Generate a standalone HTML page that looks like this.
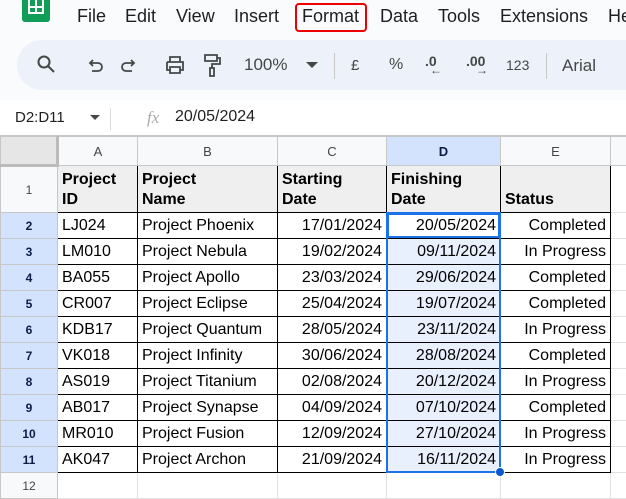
<!DOCTYPE html><html><head><style>
*{margin:0;padding:0;box-sizing:border-box}
body{width:626px;height:488px;overflow:hidden;background:#f9fbfd;font-family:"Liberation Sans",Arial,sans-serif;position:relative;color:#1f1f1f}
.a{position:absolute;white-space:nowrap}
.menu{top:6px;font-size:18px;color:#1f1f1f}
.tb{font-size:17px;color:#444746;top:55px}
table{position:absolute;left:0;top:136px;border-collapse:collapse;font-size:16px;table-layout:fixed;width:626px}
td{border:1px solid #e1e1e1;height:26px;padding:0 4px;overflow:hidden;white-space:nowrap;background:#fff;color:#000}
tr.h td{height:29px;background:#f8f9fa;color:#444;font-size:13px;text-align:center;border-color:#c7c7c7}
td.rh{background:#f8f9fa;color:#444;font-size:12px;text-align:center;border-color:#c7c7c7;padding:0}
td.rhs{background:#d3e3fd;color:#0b1d46;font-weight:bold}
.d td.b{border:1px solid #000}
td.r{text-align:right}
td.sel{background:#e8f0fe}
tr.t td.b{background:#efefef;font-weight:bold;vertical-align:bottom;line-height:20px;padding-bottom:2px;height:47px}
</style></head><body>
<div class="a" style="left:22px;top:-6px;width:28px;height:28px;background:#0f9d58;border-radius:3px"></div>
<div class="a" style="left:28px;top:0;width:16px;height:14px;border:2px solid #fff;border-top:none"></div>
<div class="a" style="left:35px;top:0;width:2px;height:14px;background:#fff"></div>
<div class="a" style="left:28px;top:6px;width:16px;height:2px;background:#fff"></div>
<div class="a menu" style="left:77px">File</div>
<div class="a menu" style="left:125px">Edit</div>
<div class="a menu" style="left:176px">View</div>
<div class="a menu" style="left:234px">Insert</div>
<div class="a menu" style="left:302px">Format</div>
<div class="a" style="left:295px;top:3px;width:72px;height:29px;border:2px solid #e00;border-radius:4px"></div>
<div class="a menu" style="left:380px">Data</div>
<div class="a menu" style="left:438px">Tools</div>
<div class="a menu" style="left:500px">Extensions</div>
<div class="a menu" style="left:608px">He</div>
<div class="a" style="left:17px;top:40px;width:640px;height:50px;background:#edf2fa;border-radius:25px"></div>
<svg class="a" style="left:36px;top:54px" width="20" height="20" viewBox="0 0 20 20"><circle cx="8" cy="8" r="5.5" fill="none" stroke="#444746" stroke-width="2"/><path d="M12 12l6 6" stroke="#444746" stroke-width="2"/></svg>
<svg class="a" style="left:86px;top:57px" width="18" height="18" viewBox="0 0 18 18"><path d="M4 6h8a4 4 0 010 8H6M7 3L4 6l3 3" fill="none" stroke="#444746" stroke-width="1.8"/></svg>
<svg class="a" style="left:120px;top:57px" width="18" height="18" viewBox="0 0 18 18"><path d="M14 6H6a4 4 0 000 8h6M11 3l3 3-3 3" fill="none" stroke="#444746" stroke-width="1.8"/></svg>
<svg class="a" style="left:164px;top:54px" width="22" height="22" viewBox="0 0 22 22"><path d="M6 3h10v5H6zM3 8h16v8h-3M6 16H3V8M6 13h10v6H6z" fill="none" stroke="#444746" stroke-width="1.8"/></svg>
<svg class="a" style="left:202px;top:53px" width="20" height="24" viewBox="0 0 20 24"><path d="M3 2h12v6H3zM15 5h3v6h-8v4M8 15h4v8H8z" fill="none" stroke="#444746" stroke-width="1.8"/></svg>
<div class="a tb" style="left:244px">100%</div>
<svg class="a" style="left:306px;top:62px" width="12" height="8"><path d="M0 0h12L6 6z" fill="#444746"/></svg>
<div class="a" style="left:334px;top:53px;width:1px;height:26px;background:#c7c7c7"></div>
<div class="a tb" style="left:351px;font-size:15px;top:57px">£</div>
<div class="a tb" style="left:389px;font-size:16px;top:56px">%</div>
<div class="a tb" style="left:425px;font-size:14px;top:53px;font-weight:bold">.0<span style="position:absolute;left:5px;top:10px;font-size:12px">←</span></div>
<div class="a tb" style="left:466px;font-size:14px;top:53px;font-weight:bold">.00<span style="position:absolute;left:10px;top:10px;font-size:12px">→</span></div>
<div class="a tb" style="left:506px;font-size:14px;top:57px">123</div>
<div class="a" style="left:546px;top:53px;width:1px;height:26px;background:#c7c7c7"></div>
<div class="a tb" style="left:562px;top:56px;font-size:17px">Arial</div>
<div class="a" style="left:0;top:100px;width:626px;height:36px;background:#fff;border-bottom:1px solid #c7c7c7"></div>
<div class="a" style="left:15px;top:109px;font-size:15px">D2:D11</div>
<svg class="a" style="left:90px;top:115px" width="10" height="6"><path d="M0 0h10L5 5z" fill="#444746"/></svg>
<div class="a" style="left:110px;top:108px;width:1px;height:22px;background:#dadce0"></div>
<div class="a" style="left:147px;top:108px;font-family:'Liberation Serif',serif;font-style:italic;color:#aaa;font-size:17px">fx</div>
<div class="a" style="left:175px;top:108px;font-size:16px">20/05/2024</div>
<table>
<colgroup><col style="width:57px"><col style="width:80px"><col style="width:140px"><col style="width:109px"><col style="width:114px"><col style="width:110px"><col style="width:16px"></colgroup>
<tr class="h"><td style="background:#e6e6e6;border-right:3px solid #bbb;border-bottom:3px solid #bbb"></td><td>A</td><td>B</td><td>C</td><td style="background:#d3e3fd;color:#0b1d46;font-weight:bold">D</td><td>E</td><td></td></tr>
<tr class="t d"><td class="rh">1</td><td class="b">Project<br>ID</td><td class="b">Project<br>Name</td><td class="b">Starting<br>Date</td><td class="b">Finishing<br>Date</td><td class="b">Status</td><td></td></tr>
<tr class="d"><td class="rh rhs">2</td><td class="b">LJ024</td><td class="b">Project Phoenix</td><td class="b r">17/01/2024</td><td class="b r sel" style="background:#fff">20/05/2024</td><td class="b r">Completed</td><td></td></tr>
<tr class="d"><td class="rh rhs">3</td><td class="b">LM010</td><td class="b">Project Nebula</td><td class="b r">19/02/2024</td><td class="b r sel">09/11/2024</td><td class="b r">In Progress</td><td></td></tr>
<tr class="d"><td class="rh rhs">4</td><td class="b">BA055</td><td class="b">Project Apollo</td><td class="b r">23/03/2024</td><td class="b r sel">29/06/2024</td><td class="b r">Completed</td><td></td></tr>
<tr class="d"><td class="rh rhs">5</td><td class="b">CR007</td><td class="b">Project Eclipse</td><td class="b r">25/04/2024</td><td class="b r sel">19/07/2024</td><td class="b r">Completed</td><td></td></tr>
<tr class="d"><td class="rh rhs">6</td><td class="b">KDB17</td><td class="b">Project Quantum</td><td class="b r">28/05/2024</td><td class="b r sel">23/11/2024</td><td class="b r">In Progress</td><td></td></tr>
<tr class="d"><td class="rh rhs">7</td><td class="b">VK018</td><td class="b">Project Infinity</td><td class="b r">30/06/2024</td><td class="b r sel">28/08/2024</td><td class="b r">Completed</td><td></td></tr>
<tr class="d"><td class="rh rhs">8</td><td class="b">AS019</td><td class="b">Project Titanium</td><td class="b r">02/08/2024</td><td class="b r sel">20/12/2024</td><td class="b r">In Progress</td><td></td></tr>
<tr class="d"><td class="rh rhs">9</td><td class="b">AB017</td><td class="b">Project Synapse</td><td class="b r">04/09/2024</td><td class="b r sel">07/10/2024</td><td class="b r">Completed</td><td></td></tr>
<tr class="d"><td class="rh rhs">10</td><td class="b">MR010</td><td class="b">Project Fusion</td><td class="b r">12/09/2024</td><td class="b r sel">27/10/2024</td><td class="b r">In Progress</td><td></td></tr>
<tr class="d"><td class="rh rhs">11</td><td class="b">AK047</td><td class="b">Project Archon</td><td class="b r">21/09/2024</td><td class="b r sel">16/11/2024</td><td class="b r">In Progress</td><td></td></tr>
<tr><td class="rh">12</td><td></td><td></td><td></td><td></td><td></td><td></td></tr>
</table>
<div class="a" style="left:386px;top:212px;width:115px;height:261px;border:2px solid #1a73e8;pointer-events:none"></div>
<div class="a" style="left:387px;top:213px;width:113px;height:25px;border:2px solid #1a73e8;pointer-events:none"></div>
<div class="a" style="left:495px;top:467px;width:10px;height:10px;border-radius:50%;background:#0b57d0;border:1px solid #fff"></div>
</body></html>
